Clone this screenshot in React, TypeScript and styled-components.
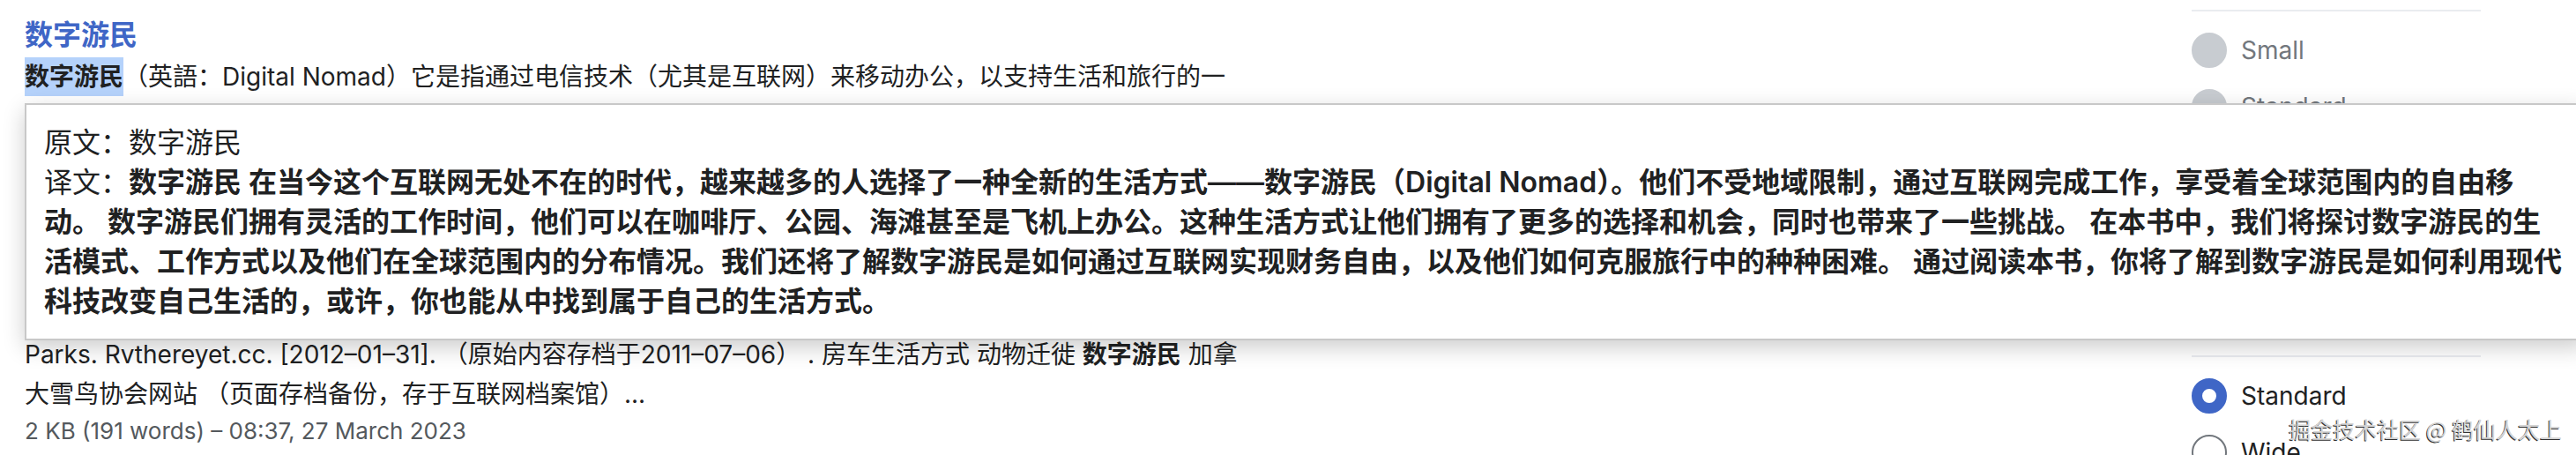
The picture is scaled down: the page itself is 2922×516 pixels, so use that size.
import React from "react";
import styled, { createGlobalStyle, css } from "styled-components";

const GlobalStyle = createGlobalStyle`
  * { box-sizing: border-box; }
  html, body { margin: 0; background: #fff; }
  body {
    min-height: 100vh;
    overflow: hidden;
    color: #202122;
    font-family: Inter, "Noto Sans CJK SC", sans-serif;
    font-size: 28px;
    line-height: 45px;
  }
  b { font-weight: 600; }
`;

const Page = styled.div`
  position: relative;
  display: flex;
  justify-content: space-between;
  height: 100vh;
  overflow: hidden;
  padding: 0 108px 0 28px;
`;

const Results = styled.main`
  position: relative;
  padding-top: 17px;
`;

const Title = styled.h3`
  margin: 0 0 3px;
  font-size: 32px;
  font-weight: 600;
`;

const TitleLink = styled.a`
  color: #3f66c6;
  text-decoration: none;
`;

const Snippet = styled.p<{ $spaced?: boolean }>`
  margin: ${(p) => (p.$spaced ? "270px" : "0")} 0 0;
  white-space: nowrap;
`;

const Selected = styled.mark`
  padding: 5px 0;
  background: #b5d2fb;
  color: inherit;
  font-weight: 600;
`;

const Meta = styled.p`
  margin: 0;
  color: #54595d;
  font-size: 26px;
  line-height: 38px;
`;

const Translation = styled.aside`
  position: absolute;
  top: 117px;
  left: 28px;
  right: -12px;
  padding: 20px;
  border: 2px solid #c8c8c8;
  background: #fff;
  box-shadow: 0 8px 24px rgba(0, 0, 0, 0.2);
  font-size: 32px;

  p { margin: 0; }
`;

const Sidebar = styled.aside`
  display: flex;
  flex-direction: column;
  flex: 0 0 328px;
  gap: 262px;
  padding-top: 11px;
`;

const Options = styled.fieldset`
  display: flex;
  flex-direction: column;
  gap: 24px;
  min-width: 0;
  margin: 0;
  padding: 24px 0 0;
  border: 0;
  border-top: 2px solid #eaecf0;
`;

const Option = styled.label<{ $muted?: boolean }>`
  display: flex;
  align-items: center;
  gap: 16px;
  height: 40px;
  ${(p) => p.$muted && css`color: #72777d;`}
`;

const Radio = styled.input`
  appearance: none;
  flex: none;
  width: 40px;
  height: 40px;
  margin: 0;
  border: 2px solid #72777d;
  border-radius: 50%;
  background: #fff;

  &:checked { border: 12px solid #3f66c6; }
  &:disabled { border-color: #c8ccd1; background: #c8ccd1; }
`;

const Watermark = styled.div`
  position: absolute;
  right: 16px;
  bottom: 12px;
  color: #d4d4d4;
  font-family: "Noto Sans CJK SC", sans-serif;
  font-size: 25px;
  line-height: 36px;
  text-shadow: -1px 1px 0 #333;
`;

type Choice = { label: string; checked?: boolean; disabled?: boolean };

function RadioGroup({ name, choices }: { name: string; choices: Choice[] }) {
  return (
    <Options>
      {choices.map(({ label, checked, disabled }) => (
        <Option key={label} $muted={disabled}>
          <Radio type="radio" name={name} defaultChecked={checked} disabled={disabled} />
          {label}
        </Option>
      ))}
    </Options>
  );
}

export default function App() {
  return (
    <>
      <GlobalStyle />
      <Page lang="zh-CN">
        <Results>
          <Title><TitleLink href="#article">数字游民</TitleLink></Title>
          <Snippet>
            <Selected>数字游民</Selected>（英語：Digital Nomad）它是指通过电信技术（尤其是互联网）来移动办公，以支持生活和旅行的一
          </Snippet>
          <Snippet $spaced>
            Parks. Rvthereyet.cc. [2012–01–31]. （原始内容存档于2011–07–06） . 房车生活方式 动物迁徙 <b>数字游民</b> 加拿
            <br />
            大雪鸟协会网站 （页面存档备份，存于互联网档案馆）...
          </Snippet>
          <Meta>2 KB (191 words) – 08:37, 27 March 2023</Meta>
        </Results>
        <Sidebar>
          <RadioGroup
            name="text-size"
            choices={[{ label: "Small", disabled: true }, { label: "Standard", disabled: true }]}
          />
          <RadioGroup name="width" choices={[{ label: "Standard", checked: true }, { label: "Wide" }]} />
        </Sidebar>
        <Translation>
          <p>原文：数字游民</p>
          <p>
            译文：<b>数字游民 在当今这个互联网无处不在的时代，越来越多的人选择了一种全新的生活方式——数字游民（Digital Nomad）。他们不受地域限制，通过互联网完成工作，享受着全球范围内的自由移动。 数字游民们拥有灵活的工作时间，他们可以在咖啡厅、公园、海滩甚至是飞机上办公。这种生活方式让他们拥有了更多的选择和机会，同时也带来了一些挑战。 在本书中，我们将探讨数字游民的生活模式、工作方式以及他们在全球范围内的分布情况。我们还将了解数字游民是如何通过互联网实现财务自由，以及他们如何克服旅行中的种种困难。 通过阅读本书，你将了解到数字游民是如何利用现代科技改变自己生活的，或许，你也能从中找到属于自己的生活方式。</b>
          </p>
        </Translation>
        <Watermark>掘金技术社区 @ 鹤仙人太上</Watermark>
      </Page>
    </>
  );
}
